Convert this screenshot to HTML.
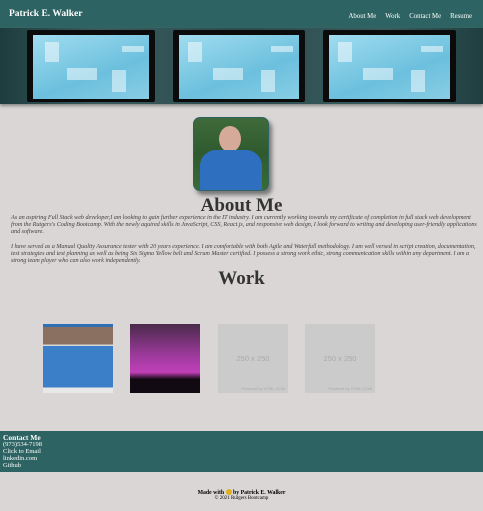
<!DOCTYPE html>
<html><head><style>
body{margin:0;width:483px;height:511px;background:#d9d6d5;font-family:"Liberation Serif",serif;position:relative;overflow:hidden}
.hdr{position:absolute;left:0;top:0;width:483px;height:28px;background:#2d6362}
.hdr .n{position:absolute;left:9px;top:9px;color:#fff;font-weight:bold;font-size:9.5px}
.hdr .nav{position:absolute;right:11px;top:13px;color:#fff;font-size:6.8px}
.hdr .nav span{margin-left:9px}
.ban{position:absolute;left:0;top:28px;width:483px;height:76px;background:linear-gradient(90deg,#1d3c3e,#3a5c5e 20%,#2c4c4f 50%,#3a5c5e 80%,#203e40);box-shadow:0 2px 3px #888}
.scr{position:absolute;top:2px;height:72px;background:#0b0b0b;border-radius:2px}
.scr i{position:absolute;left:6px;right:6px;top:5px;bottom:3px;background:linear-gradient(160deg,#a0dcef,#6cc0de 60%,#88cde4)}
.scr b{position:absolute;background:rgba(255,255,255,.5)}
.ph{position:absolute;left:193px;top:117px;width:74px;height:72px;border-radius:7px;border:1px solid #2d6362;background:linear-gradient(#3f6a3a,#2f5a2e 50%,#3a6b35);box-shadow:3px 4px 4px #777;overflow:hidden}
h1{position:absolute;margin:0;left:0;width:483px;text-align:center;font-size:19px;color:#333;font-weight:bold}
.p{position:absolute;left:11px;width:472px;font-style:italic;font-size:6.2px;line-height:7.1px;color:#444;letter-spacing:-0.05px}
.w{position:absolute;top:324px;width:70px;height:69px}
.ph2{background:#cbcbcb;color:#a9a9a9;font-family:"Liberation Sans",sans-serif;font-size:7.5px;text-align:center}
.ph2 small{position:absolute;right:3px;bottom:2px;font-size:4px}
.ft{position:absolute;left:0;top:431px;width:483px;height:41px;background:#2d6362;color:#fff;font-size:6.5px;line-height:6.9px}
</style></head><body>
<div class="hdr"><div class="n">Patrick E. Walker</div><div class="nav"><span>About Me</span><span>Work</span><span>Contact Me</span><span>Resume</span></div></div>
<div class="ban">
<div class="scr" style="left:27px;width:128px"><i></i><b style="left:18px;top:12px;width:14px;height:20px"></b><b style="left:95px;top:16px;width:22px;height:6px"></b><b style="left:40px;top:38px;width:30px;height:12px"></b><b style="left:85px;top:40px;width:14px;height:22px"></b></div>
<div class="scr" style="left:173px;width:132px"><i></i><b style="left:15px;top:12px;width:14px;height:20px"></b><b style="left:98px;top:16px;width:22px;height:6px"></b><b style="left:40px;top:38px;width:30px;height:12px"></b><b style="left:88px;top:40px;width:14px;height:22px"></b></div>
<div class="scr" style="left:323px;width:133px"><i></i><b style="left:15px;top:12px;width:14px;height:20px"></b><b style="left:98px;top:16px;width:22px;height:6px"></b><b style="left:40px;top:38px;width:30px;height:12px"></b><b style="left:88px;top:40px;width:14px;height:22px"></b></div>
</div>
<div class="ph"><div style="position:absolute;left:25px;top:8px;width:22px;height:26px;border-radius:50%;background:#d6aa98"></div><div style="position:absolute;left:6px;top:32px;width:62px;height:42px;border-radius:16px 16px 0 0;background:#2f6fc0"></div></div>
<h1 style="top:195px">About Me</h1>
<div class="p" style="top:214px">As an aspiring Full Stack web developer,I am looking to gain further experience in the IT industry. I am currently working towards my certificate of completion in full stack web development from the Rutgers's Coding Bootcamp. With the newly aquired skills in JavaScript, CSS, React.js, and responsive web design, I look forward to writing and developing user-friendly applications and software.</div>
<div class="p" style="top:243px">I have served as a Manual Quality Assurance tester with 20 years experience. I am comfortable with both Agile and Waterfall methodology. I am well versed in script creation, documentation, test strategies and test planning as well as being Six Sigma Yellow belt and Scrum Master certified. I possess a strong work ethic, strong communication skills within any department. I am a strong team player who can also work independently.</div>
<h1 style="top:268px">Work</h1>
<div class="w" style="left:43px;background:linear-gradient(#2f6fb5 0 4%,#8a7060 4% 30%,#d8d8d8 30% 32%,#3a7fc8 32% 92%,#e8e8e8 92%)"></div>
<div class="w" style="left:130px;background:linear-gradient(#4a2a4a,#9c3a9c 45%,#c040b8 70%,#120a12 80%)"></div>
<div class="w ph2" style="left:218px"><div style="margin-top:30px">250 x 250</div><small>Powered by HTML.COM</small></div>
<div class="w ph2" style="left:305px"><div style="margin-top:30px">250 x 250</div><small>Powered by HTML.COM</small></div>
<div class="ft"><div style="position:absolute;left:3px;top:3px"><div style="font-weight:bold;font-size:7.5px;line-height:8px">Contact Me</div>(973)534-7198<br>Click to Email<br>linkedin.com<br>Github</div></div>
<div style="position:absolute;left:0;width:483px;top:489px;text-align:center;font-size:5.8px;font-weight:bold">Made with <span style="display:inline-block;width:6px;height:6px;border-radius:50%;background:#e0b020;vertical-align:-1px"></span> by Patrick E. Walker</div>
<div style="position:absolute;left:0;width:483px;top:496px;text-align:center;font-size:5px">© 2021 Rutgers Bootcamp</div>
</body></html>
